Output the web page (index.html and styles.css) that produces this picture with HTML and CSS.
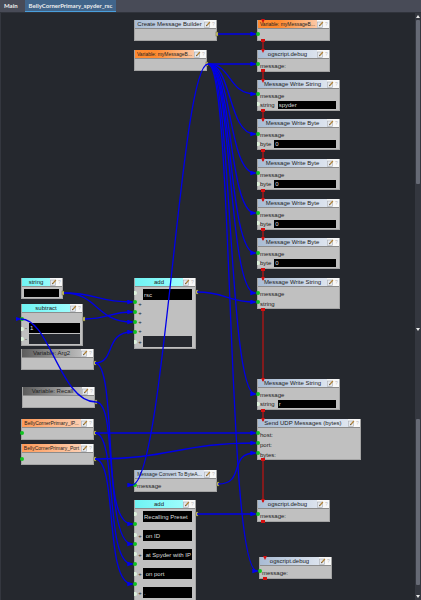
FILE: index.html
```html
<!DOCTYPE html>
<html lang="en">
<head>
  <meta charset="UTF-8">
  <meta name="viewport" content="width=device-width, initial-scale=1.0">
  <title>BellyCornerPrimary_spyder_rsc</title>
  <link rel="stylesheet" href="styles.css">
</head>
<body>
  <svg class="defs" width="0" height="0" aria-hidden="true">
    <symbol id="edit" viewBox="0 0 7 7">
      <rect x="0.5" y="1" width="5" height="5.5" fill="#e4e8ee" stroke="#a3a8b1" stroke-width="0.6"/>
      <path d="M2 5.3 L2.4 4 L5.4 0.6 L6.4 1.5 L3.4 4.8 Z" fill="#b08238"/>
      <path d="M2 5.3 L2.4 4 L3.4 4.8 Z" fill="#4b453c"/>
    </symbol>
    <marker id="arrow" viewBox="0 0 6 4" refX="4" refY="2" markerWidth="7" markerHeight="5" markerUnits="userSpaceOnUse">
      <path d="M0 0 L6 2 L0 4 Z" fill="#0000f0"/>
    </marker>
  </svg>

  <nav class="tabs">
    <a href="#main" class="tab">Main</a>
    <a href="#canvas" class="tab active">BellyCornerPrimary_spyder_rsc</a>
  </nav>

  <main id="canvas" class="canvas">
    <!-- left column -->
    <section class="node cyan" id="n-string">
      <header><h2>string</h2><button aria-label="Edit"><svg><use href="#edit"/></svg></button><button class="help">?</button></header>
      <div class="body"><input class="wide" aria-label="string value"></div>
    </section>
    <section class="node cyan" id="n-subtract">
      <header><h2>subtract</h2><button aria-label="Edit"><svg><use href="#edit"/></svg></button><button class="help">?</button></header>
      <div class="body slots">
        <label class="slot"><span>-</span><input value="1"></label>
        <label class="slot"><span>-</span><input class="empty"></label>
      </div>
    </section>
    <section class="node gray" id="n-arg2">
      <header><h2>Variable: Arg2</h2><button aria-label="Edit"><svg><use href="#edit"/></svg></button><button class="help">?</button></header>
      <div class="body"></div>
    </section>
    <section class="node gray" id="n-recall">
      <header><h2>Variable: Recall</h2><button aria-label="Edit"><svg><use href="#edit"/></svg></button><button class="help">?</button></header>
      <div class="body"></div>
    </section>
    <section class="node peach" id="n-ip">
      <header><h2 class="tight">BellyCornerPrimary_IP...</h2><button aria-label="Edit"><svg><use href="#edit"/></svg></button><button class="help">?</button></header>
      <div class="body"></div>
    </section>
    <section class="node peach" id="n-port">
      <header><h2 class="tight">BellyCornerPrimary_Port</h2><button aria-label="Edit"><svg><use href="#edit"/></svg></button><button class="help">?</button></header>
      <div class="body"></div>
    </section>

    <!-- middle column -->
    <section class="node" id="n-create">
      <header><h2>Create Message Builder</h2><button aria-label="Edit"><svg><use href="#edit"/></svg></button><button class="help">?</button></header>
      <div class="body"></div>
    </section>
    <section class="node orange" id="n-var">
      <header><h2 class="tight">Variable: myMessageB...</h2><button aria-label="Edit"><svg><use href="#edit"/></svg></button><button class="help">?</button></header>
      <div class="body"></div>
    </section>
    <section class="node cyan" id="n-add">
      <header><h2>add</h2><button aria-label="Edit"><svg><use href="#edit"/></svg></button><button class="help">?</button></header>
      <div class="body adder">
        <input value="rsc" aria-label="first term">
        <div class="plus"><span>+</span><span>+</span><span>+</span><span>+</span></div>
        <label class="slot"><span>+</span><input class="empty"></label>
      </div>
    </section>
    <section class="node" id="n-convert">
      <header><h2 class="tight">Message Convert To ByteA...</h2><button aria-label="Edit"><svg><use href="#edit"/></svg></button><button class="help">?</button></header>
      <div class="body"><p>message</p></div>
    </section>
    <section class="node cyan" id="n-add2">
      <header><h2>add</h2><button aria-label="Edit"><svg><use href="#edit"/></svg></button><button class="help">?</button></header>
      <div class="body terms">
        <label class="slot"><span></span><input value="Recalling Preset"></label>
        <label class="slot"><span>+</span><input value=" on ID"></label>
        <label class="slot"><span>+</span><input value=" at Spyder with IP"></label>
        <label class="slot"><span>+</span><input value=" on port"></label>
        <label class="slot"><span>+</span><input value="."></label>
      </div>
    </section>

    <!-- right column -->
    <section class="node orange" id="n-var2">
      <header><h2 class="tight">Variable: myMessageB...</h2><button aria-label="Edit"><svg><use href="#edit"/></svg></button><button class="help">?</button></header>
      <div class="body"></div>
    </section>
    <section class="node" id="n-debug1">
      <header><h2>ogscript.debug</h2><button aria-label="Edit"><svg><use href="#edit"/></svg></button><button class="help">?</button></header>
      <div class="body"><p>message:</p></div>
    </section>
    <section class="node" id="n-write1">
      <header><h2>Message Write String</h2><button aria-label="Edit"><svg><use href="#edit"/></svg></button><button class="help">?</button></header>
      <div class="body"><p>message</p><label class="field">string <input value="spyder"></label></div>
    </section>
    <section class="node" id="n-byte1">
      <header><h2>Message Write Byte</h2><button aria-label="Edit"><svg><use href="#edit"/></svg></button><button class="help">?</button></header>
      <div class="body"><p>message</p><label class="field">byte <input value="0"></label></div>
    </section>
    <section class="node" id="n-byte2">
      <header><h2>Message Write Byte</h2><button aria-label="Edit"><svg><use href="#edit"/></svg></button><button class="help">?</button></header>
      <div class="body"><p>message</p><label class="field">byte <input value="0"></label></div>
    </section>
    <section class="node" id="n-byte3">
      <header><h2>Message Write Byte</h2><button aria-label="Edit"><svg><use href="#edit"/></svg></button><button class="help">?</button></header>
      <div class="body"><p>message</p><label class="field">byte <input value="0"></label></div>
    </section>
    <section class="node" id="n-byte4">
      <header><h2>Message Write Byte</h2><button aria-label="Edit"><svg><use href="#edit"/></svg></button><button class="help">?</button></header>
      <div class="body"><p>message</p><label class="field">byte <input value="0"></label></div>
    </section>
    <section class="node" id="n-write2">
      <header><h2>Message Write String</h2><button aria-label="Edit"><svg><use href="#edit"/></svg></button><button class="help">?</button></header>
      <div class="body"><p>message</p><p>string</p></div>
    </section>
    <section class="node" id="n-write3">
      <header><h2>Message Write String</h2><button aria-label="Edit"><svg><use href="#edit"/></svg></button><button class="help">?</button></header>
      <div class="body"><p>message</p><label class="field">string <input value="r"></label></div>
    </section>
    <section class="node" id="n-udp">
      <header><h2>Send UDP Messages (bytes)</h2><button aria-label="Edit"><svg><use href="#edit"/></svg></button><button class="help">?</button></header>
      <div class="body"><p>host:</p><p>port:</p><p>bytes:</p></div>
    </section>
    <section class="node" id="n-debug2">
      <header><h2>ogscript.debug</h2><button aria-label="Edit"><svg><use href="#edit"/></svg></button><button class="help">?</button></header>
      <div class="body"><p>message:</p></div>
    </section>
    <section class="node" id="n-debug3">
      <header><h2>ogscript.debug</h2><button aria-label="Edit"><svg><use href="#edit"/></svg></button><button class="help">?</button></header>
      <div class="body"><p>message:</p></div>
    </section>

    <svg class="wires" width="400" height="587" viewBox="0 13 400 587" aria-hidden="true">
      <!-- sockets -->
      <g class="in">
        <circle cx="258" cy="34" r="2"/><circle cx="258" cy="64" r="2"/><circle cx="258" cy="94" r="2"/>
        <circle cx="258" cy="134" r="2"/><circle cx="258" cy="173" r="2"/><circle cx="258" cy="213" r="2"/>
        <circle cx="258" cy="253" r="2"/><circle cx="258" cy="293" r="2"/><circle cx="258" cy="302" r="2"/>
        <circle cx="258" cy="394" r="2"/><circle cx="258" cy="433" r="2"/><circle cx="258" cy="443" r="2"/>
        <circle cx="258" cy="453" r="2"/><circle cx="258" cy="514" r="2"/><circle cx="260" cy="571" r="2"/>
        <circle cx="135" cy="302" r="2"/><circle cx="135" cy="312" r="2"/><circle cx="135" cy="322" r="2"/>
        <circle cx="135" cy="332" r="2"/><circle cx="135" cy="485" r="2"/><circle cx="135" cy="524" r="2"/>
        <circle cx="135" cy="544" r="2"/><circle cx="135" cy="564" r="2"/><circle cx="135" cy="584" r="2"/>
        <circle cx="22" cy="319" r="2"/><circle cx="22" cy="433" r="2"/><circle cx="22" cy="459" r="2"/>
      </g>
      <g class="free">
        <path d="M257 102 h1 a2 2 0 0 1 0 4 h-1z M257 142 h1 a2 2 0 0 1 0 4 h-1z M257 182 h1 a2 2 0 0 1 0 4 h-1z"/>
        <path d="M257 221 h1 a2 2 0 0 1 0 4 h-1z M257 261 h1 a2 2 0 0 1 0 4 h-1z M257 402 h1 a2 2 0 0 1 0 4 h-1z"/>
        <path d="M134 291 h1 a2 2 0 0 1 0 4 h-1z M134 340 h1 a2 2 0 0 1 0 4 h-1z M134 512 h1 a2 2 0 0 1 0 4 h-1z"/>
        <path d="M134 533 h1 a2 2 0 0 1 0 4 h-1z M134 552 h1 a2 2 0 0 1 0 4 h-1z M134 572 h1 a2 2 0 0 1 0 4 h-1z M134 592 h1 a2 2 0 0 1 0 4 h-1z"/>
        <path d="M21 327 h1 a2 2 0 0 1 0 4 h-1z M21 337 h1 a2 2 0 0 1 0 4 h-1z"/>
      </g>
      <g class="out">
        <rect x="216" y="32" width="2" height="4"/><rect x="206" y="62" width="2" height="4"/>
        <rect x="62" y="291" width="2" height="4"/><rect x="83" y="317" width="2" height="4"/>
        <rect x="94" y="361" width="2" height="4"/><rect x="95" y="400" width="2" height="4"/>
        <rect x="94" y="431" width="2" height="4"/><rect x="94" y="457" width="2" height="4"/>
        <rect x="196" y="290" width="2" height="4"/><rect x="217" y="482" width="2" height="4"/>
        <rect x="196" y="512" width="2" height="4"/>
      </g>

      <!-- data flow -->
      <g class="data">
        <path d="M218 34 H255"/>
        <path d="M208 64 H255"/>
        <path d="M208 64 C232 64 228 94 255 94"/>
        <path d="M208 64 C232 64 228 134 255 134"/>
        <path d="M208 64 C232 64 228 173 255 173"/>
        <path d="M208 64 C232 64 228 213 255 213"/>
        <path d="M208 64 C232 64 228 253 255 253"/>
        <path d="M208 64 C232 64 228 293 255 293"/>
        <path d="M208 64 C232 64 228 394 255 394"/>
        <path d="M208 64 C234 64 226 571 257 571"/>
        <path d="M208 64 C180 64 164 485 132 485"/>
        <path d="M197 292 C225 292 228 302 255 302"/>
        <path d="M64 293 C98 293 96 302 132 302"/>
        <path d="M64 293 C98 293 96 322 132 322"/>
        <path d="M85 319 C108 319 110 312 132 312"/>
        <path d="M95 363 C116 363 104 332 132 332"/>
        <path d="M96 402 C118 402 102 524 132 524"/>
        <path d="M95 363 C118 363 102 544 132 544"/>
        <path d="M95 433 C118 433 104 564 132 564"/>
        <path d="M95 459 C118 459 104 584 132 584"/>
        <path d="M95 433 H255"/>
        <path d="M95 459 C170 459 180 443 255 443"/>
        <path d="M218 484 C246 484 228 453 255 453"/>
        <path d="M197 514 H255"/>
      </g>
      <path class="back" d="M96 402 C60 402 50 319 21 319"/>
      <path class="back-arrow" d="M16 317 L22 319 L16 321 Z"/>

      <!-- execution order -->
      <g class="flow">
        <path d="M263 40 V51 M263 70 V81 M263 110 V121 M263 150 V161 M263 190 V201 M263 229 V240 M263 269 V280 M263 309 V381 M263 410 V421 M263 459 V502"/>
      </g>
      <g class="flow-pin">
        <path d="M261 19h4l-2 4z M261 49h4l-2 4z M261 79h4l-2 4z M261 118h4l-2 4z M261 158h4l-2 4z M261 198h4l-2 4z M261 237h4l-2 4z M261 277h4l-2 4z M261 378h4l-2 4z M261 418h4l-2 4z M261 499h4l-2 4z M263 556h4l-2 4z"/>
        <path d="M261 39h4v3h-4z M261 69h4v3h-4z M261 109h4v3h-4z M261 149h4v3h-4z M261 189h4v3h-4z M261 228h4v3h-4z M261 268h4v3h-4z M261 308h4v3h-4z M261 409h4v3h-4z M261 458h4v3h-4z M261 520h4v3h-4z M263 577h4v3h-4z"/>
      </g>
    </svg>

    <aside class="scrollbars">
      <div class="scrollbar upper"><i class="up"></i><div class="thumb"></div><i class="down"></i></div>
      <div class="scrollbar lower"><div class="thumb"></div><i class="down"></i></div>
    </aside>
  </main>
</body>
</html>
```
FILE: styles.css
```css
* {
  margin: 0;
  padding: 0;
  box-sizing: border-box;
}

body {
  display: flex;
  flex-direction: column;
  height: 100vh;
  background: #25282e;
  color: #222;
  font-family: "Liberation Sans", Arial, sans-serif;
  font-size: 6px;
  line-height: 8px;
  overflow: hidden;
}

.defs {
  position: absolute;
}

/* Tabs */
.tabs {
  display: flex;
  gap: 3px;
  height: 13px;
  background: #484b57;
  border-bottom: 1px solid #30333b;
}

.tab {
  padding: 2px 4px 0;
  color: #eee;
  font-family: Lato, "Liberation Sans", sans-serif;
  font-weight: bold;
  text-decoration: none;
}

.tab.active {
  background: #41658a;
  border-bottom: 1px solid #4a9fdc;
}

/* Canvas */
.canvas {
  flex: 1;
  position: relative;
  display: flex;
  justify-content: flex-end;
  border-left: 1px solid #34373f;
  overflow: hidden;
}

.wires {
  position: absolute;
  top: 0;
  left: -1px;
  pointer-events: none;
}

.data path,
.back {
  fill: none;
  stroke: #0000e8;
  stroke-width: 1.3;
}

.data path { marker-end: url(#arrow); }
.back-arrow { fill: #0000f0; }

.flow path {
  fill: none;
  stroke: #b41414;
  stroke-width: 1.3;
}

.flow-pin { fill: #d41010; }
.in { fill: #12c422; }
.free { fill: #dcf2dc; }
.out { fill: #d8d070; stroke: #55532c; stroke-width: 0.5; }

/* Nodes */
.node {
  position: absolute;
  width: 73px;
  min-height: 21px;
  background: #c0c0c0;
  border: 1px solid #a4a4a4;
  border-top: 0;
}

.node header {
  display: flex;
  align-items: center;
  height: 9px;
  background: linear-gradient(to right, #a9bcd4, #e6ebf3);
  border-bottom: 1px solid #8c8c8c;
}

.node h2 {
  flex: 1;
  min-width: 0;
  height: 8px;
  font-size: 6px;
  font-weight: normal;
  text-align: center;
  white-space: nowrap;
}

.node h2.tight { font-size: 5px; }

.node.orange header { background: linear-gradient(to right, #ff8a30 30%, #fadccc); }
.node.peach header { background: linear-gradient(to right, #ff9a58, #fcd9c4); }
.node.cyan header { background: linear-gradient(to right, #6ff4f4, #a8ffff); }
.node.gray header { background: linear-gradient(to right, #5c5c5c, #d0d0d0); }

.node button {
  width: 7px;
  height: 8px;
  border: 0;
  background: #f8f8f8;
}

.node button svg {
  display: block;
  width: 7px;
  height: 7px;
}

.node .help {
  width: 5px;
  color: #b8b8b8;
  font: 5px/8px "Liberation Sans", Arial, sans-serif;
}

.body {
  padding: 2px 3px 0 2px;
}

.body p {
  height: 10px;
  line-height: 10px;
}

.body input {
  min-width: 0;
  height: 8px;
  border: 0;
  padding-left: 1px;
  background: #000;
  color: #ddd;
  font: 6px/8px "Liberation Sans", Arial, sans-serif;
}

.body input.empty { background: #25282e; }

.body input.wide {
  display: block;
  width: 100%;
}

.field {
  display: flex;
  gap: 3px;
  align-items: center;
  height: 8px;
}

.field input { flex: 1; }

/* Operator nodes */
.slot {
  display: flex;
  align-items: center;
}

.slot span {
  width: 6px;
  text-align: center;
}

.slot input {
  flex: 1;
  width: 0;
  height: 11px;
}

.body.slots {
  display: grid;
  gap: 1px;
  padding: 10px 2px 0 1px;
}

.slots .slot input { height: 10px; }

.adder {
  display: flex;
  flex-direction: column;
}

.adder > input {
  height: 11px;
  margin-left: 6px;
}

.plus {
  display: grid;
  grid-template-rows: repeat(4, 9px);
  width: 6px;
  text-align: center;
}

.terms {
  display: grid;
  grid-template-columns: minmax(0, 1fr);
  gap: 8px;
}

/* Node places on the canvas */
#n-string { left: 20px; top: 265px; width: 42px; }
#n-subtract { left: 20px; top: 291px; width: 62px; height: 42px; }
#n-arg2 { left: 20px; top: 336px; }
#n-recall { left: 21px; top: 374px; }
#n-ip { left: 20px; top: 406px; }
#n-port { left: 20px; top: 431px; }

#n-create { left: 133px; top: 7px; width: 83px; }
#n-var { left: 133px; top: 37px; }
#n-add { left: 133px; top: 265px; width: 62px; height: 71px; }
#n-convert { left: 133px; top: 457px; width: 83px; }
#n-add2 { left: 133px; top: 487px; width: 62px; height: 120px; }

#n-var2 { left: 256px; top: 7px; }
#n-debug1 { left: 256px; top: 37px; }
#n-write1 { left: 256px; top: 67px; width: 83px; height: 31px; }
#n-byte1 { left: 256px; top: 106px; width: 83px; height: 31px; }
#n-byte2 { left: 256px; top: 146px; width: 83px; height: 31px; }
#n-byte3 { left: 256px; top: 186px; width: 83px; height: 31px; }
#n-byte4 { left: 256px; top: 225px; width: 83px; height: 31px; }
#n-write2 { left: 256px; top: 265px; width: 83px; height: 31px; }
#n-write3 { left: 256px; top: 366px; width: 83px; height: 31px; }
#n-udp { left: 256px; top: 406px; width: 104px; height: 41px; }
#n-debug2 { left: 256px; top: 487px; }
#n-debug3 { left: 258px; top: 544px; }

/* Scrollbars */
.scrollbars {
  display: flex;
  flex-direction: column;
  width: 6px;
  background: #34373f;
}

.scrollbar {
  display: flex;
  flex-direction: column;
  align-items: center;
  gap: 2px;
  padding: 2px 0;
}

.upper { flex: 6; }
.lower { flex: 5; }

.thumb {
  width: 4px;
  background: #666a75;
  border-radius: 1px;
}

.upper .thumb { height: 52%; }
.lower .thumb { height: 63%; margin-top: auto; }

.scrollbar i {
  border: 2px solid transparent;
}

.scrollbar .up {
  border-top: 0;
  border-bottom: 3px solid #e8e8e8;
}

.scrollbar .down {
  border-bottom: 0;
  border-top: 3px solid #e8e8e8;
  margin-top: auto;
}

.lower .down { margin-top: 8px; }
```
